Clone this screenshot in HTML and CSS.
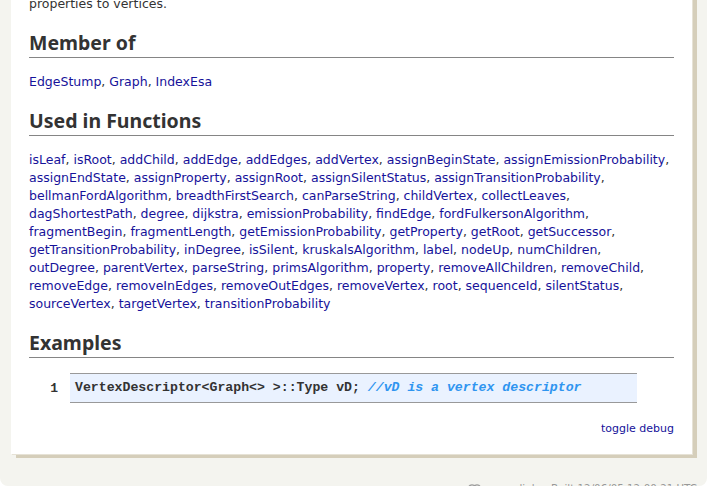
FILE: index.html
```html
<!DOCTYPE html>
<html>
<head>
<meta charset="utf-8">
<link rel="stylesheet" href="styles.css">
</head>
<body>
<div class="page">
  <div class="panel">
    <p class="intro">properties to vertices.</p>

    <h2 class="sec">Member of</h2>
    <p class="links"><a href="#">EdgeStump</a>, <a href="#">Graph</a>, <a href="#">IndexEsa</a></p>

    <h2 class="sec">Used in Functions</h2>
    <p class="links"><a href="#">isLeaf</a>, <a href="#">isRoot</a>, <a href="#">addChild</a>, <a href="#">addEdge</a>, <a href="#">addEdges</a>, <a href="#">addVertex</a>, <a href="#">assignBeginState</a>, <a href="#">assignEmissionProbability</a>, <a href="#">assignEndState</a>, <a href="#">assignProperty</a>, <a href="#">assignRoot</a>, <a href="#">assignSilentStatus</a>, <a href="#">assignTransitionProbability</a>, <a href="#">bellmanFordAlgorithm</a>, <a href="#">breadthFirstSearch</a>, <a href="#">canParseString</a>, <a href="#">childVertex</a>, <a href="#">collectLeaves</a>, <a href="#">dagShortestPath</a>, <a href="#">degree</a>, <a href="#">dijkstra</a>, <a href="#">emissionProbability</a>, <a href="#">findEdge</a>, <a href="#">fordFulkersonAlgorithm</a>, <a href="#">fragmentBegin</a>, <a href="#">fragmentLength</a>, <a href="#">getEmissionProbability</a>, <a href="#">getProperty</a>, <a href="#">getRoot</a>, <a href="#">getSuccessor</a>, <a href="#">getTransitionProbability</a>, <a href="#">inDegree</a>, <a href="#">isSilent</a>, <a href="#">kruskalsAlgorithm</a>, <a href="#">label</a>, <a href="#">nodeUp</a>, <a href="#">numChildren</a>, <a href="#">outDegree</a>, <a href="#">parentVertex</a>, <a href="#">parseString</a>, <a href="#">primsAlgorithm</a>, <a href="#">property</a>, <a href="#">removeAllChildren</a>, <a href="#">removeChild</a>, <a href="#">removeEdge</a>, <a href="#">removeInEdges</a>, <a href="#">removeOutEdges</a>, <a href="#">removeVertex</a>, <a href="#">root</a>, <a href="#">sequenceId</a>, <a href="#">silentStatus</a>, <a href="#">sourceVertex</a>, <a href="#">targetVertex</a>, <a href="#">transitionProbability</a></p>

    <h2 class="sec">Examples</h2>
    <div class="example">
      <span class="ln">1</span>
      <div class="code">VertexDescriptor&lt;Graph&lt;&gt; &gt;::Type vD; <span class="comment">//vD is a vertex descriptor</span></div>
    </div>

    <div class="debug"><a href="#">toggle debug</a></div>
  </div>

  <div class="footer">
    <svg class="plink" width="13" height="8" viewBox="0 0 13 8"><ellipse cx="4" cy="4" rx="3.3" ry="3.2" fill="none" stroke="#999" stroke-width="1.2"/><ellipse cx="9" cy="4" rx="3.3" ry="3.2" fill="none" stroke="#999" stroke-width="1.2"/></svg>
    <span>permalink</span>
    <span class="dot">·</span>
    <span>Built 12/06/05 12:00:21 UTC</span>
  </div>
</div>
</body>
</html>
```

FILE: styles.css
```css
html, body {
  margin: 0;
  padding: 0;
  background: #ffffff;
  overflow: hidden;
}

.page {
  background: #f4f4ef;
  border-radius: 0 0 8px 8px;
  padding: 0 10px 0 11px;
  overflow: hidden;
  height: 486px;
  box-sizing: border-box;
}

.panel {
  background: #ffffff;
  width: 681px;
  box-sizing: border-box;
  margin-top: -5px;
  padding: 0 18px 18px 18px;
  box-shadow: 1px 1px 0 #e6e2d6, 5px 4px 0 #d5ceba;
  font-family: "DejaVu Sans", sans-serif;
  font-size: 12.5px;
  color: #333;
}

.intro {
  margin: 0;
  line-height: 18px;
}

.sec {
  font-family: "Noto Sans", sans-serif;
  font-weight: bold;
  font-size: 19.5px;
  line-height: 24px;
  color: #333;
  margin: 18px 0 0 0;
  padding-bottom: 2px;
  border-bottom: 1px solid #858585;
}

.links {
  margin: 15px 0 0 0;
  line-height: 18px;
}

a {
  color: #16129a;
  text-decoration: none;
}

.example {
  display: flex;
  margin-top: 15px;
  align-items: center;
}

.ln {
  width: 29px;
  padding-right: 12px;
  text-align: right;
  font-family: "Liberation Mono", monospace;
  font-size: 13px;
  font-weight: bold;
  color: #333;
}

.code {
  width: 567px;
  box-sizing: border-box;
  background: #eaf2ff;
  border-top: 1px solid #999;
  border-bottom: 1px solid #999;
  height: 30px;
  line-height: 28px;
  padding-left: 5px;
  font-family: "Liberation Mono", monospace;
  font-size: 13.2px;
  font-weight: bold;
  color: #333;
  white-space: pre;
}

.comment {
  color: #2f95f0;
  font-style: italic;
}

.debug {
  margin-top: 19px;
  text-align: right;
  font-size: 11px;
  line-height: 14px;
}

.footer {
  margin-top: 27px;
  display: flex;
  justify-content: flex-end;
  align-items: center;
  gap: 5px;
  font-family: "DejaVu Sans", sans-serif;
  font-size: 10.3px;
  color: #999;
  line-height: 14px;
}
```
